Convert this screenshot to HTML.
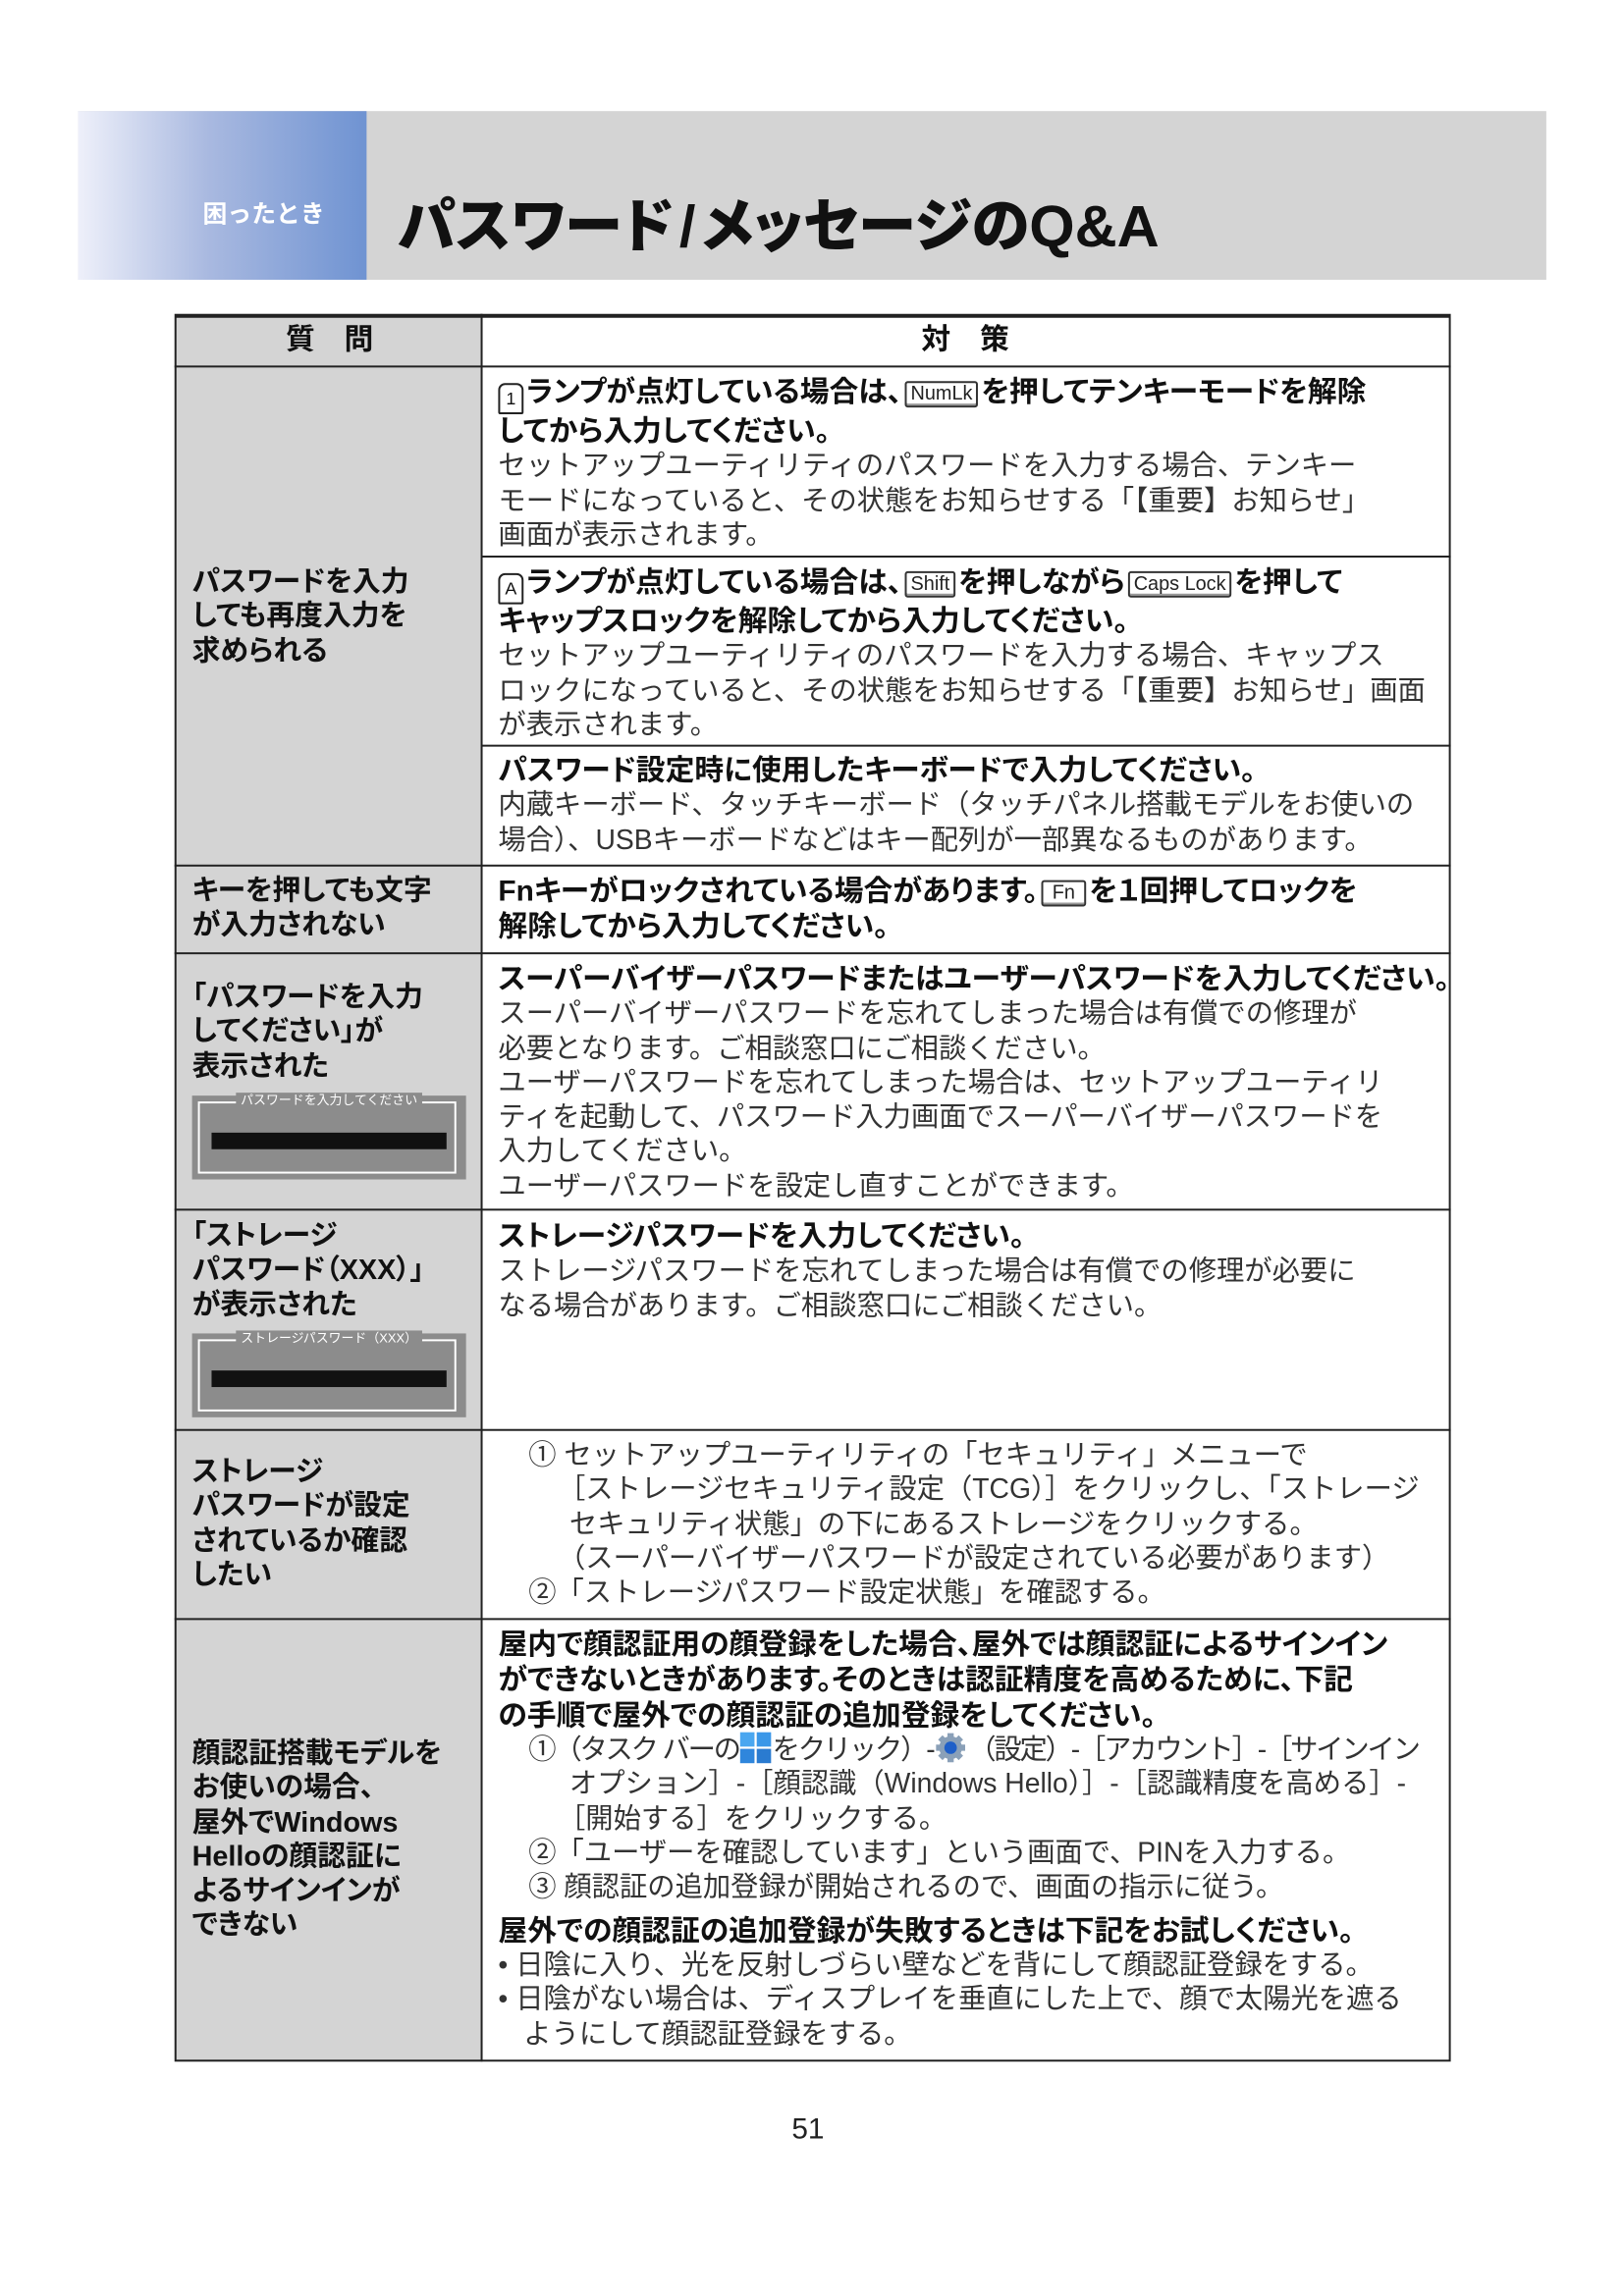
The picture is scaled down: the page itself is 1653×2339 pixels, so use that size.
<!DOCTYPE html>
<html><head><meta charset="utf-8">
<style>
body{margin:0;width:1653px;height:2339px;background:#fff;position:relative;font-family:"Liberation Sans","Noto Sans CJK JP",sans-serif;color:#333;overflow:hidden}
#w{position:absolute;left:0;top:0;width:1653px;height:2339px;transform:scale(0.993);transform-origin:0 0}
.abs{position:absolute}
.hdr{left:80px;top:114px;width:1506px;height:173px;background:#d4d4d4}
.blue{left:80px;top:114px;width:296px;height:173px;background:linear-gradient(90deg,#eef0fa 0%,#a9b9e0 45%,#6f93d2 100%)}
.cat{left:208px;top:200px;color:#fff;font-size:25px;font-weight:700}
.title{left:408px;top:184px;font-size:60px;font-weight:900;color:#111;letter-spacing:0px;font-feature-settings:"palt"}
.cell{position:absolute;box-sizing:border-box}
.l{left:179px;width:315px;background:#d4d4d4}
.r{left:494px;width:994px;background:#fff}
.hline{position:absolute;left:179px;width:1309px;height:2px;background:#222}
.txt{position:absolute;font-size:28.5px;line-height:35.3px;white-space:nowrap}
.lt{left:197px;font-weight:700;color:#111;font-feature-settings:"palt";font-size:29px}
.rt{left:511px}
b{color:#111;font-feature-settings:"palt";font-weight:700;font-size:30px}
.key{display:inline-block;border:2px solid #333;border-radius:3px;font-size:20px;line-height:23px;padding:0 4px;vertical-align:2px;font-weight:400;color:#222;box-shadow:inset 0 -2px 0 #999;margin:0 3px}
.lamp{display:inline-block;width:22px;height:28px;border:2px solid #222;border-radius:7px 7px 2px 2px;font-size:18px;line-height:28px;text-align:center;vertical-align:-3px;font-weight:400;margin-right:3px}
.pw{position:absolute;left:197px;width:281px;height:86px;background:#8c8c8c}
.pw .fr{position:absolute;left:6px;top:6px;right:10px;bottom:6px;border:2px solid #fff}
.pw .lb{position:absolute;left:0;right:0;top:-2px;text-align:center;font-size:13px;color:#fff;line-height:14px}
.pw .lb span{background:#8c8c8c;padding:0 5px}
.pw .bar{position:absolute;left:20px;right:20px;top:38px;height:17px;background:#111}
</style></head><body><div id="w">
<div class="abs hdr"></div><div class="abs blue"></div>
<div class="abs cat">困ったとき</div>
<div class="abs title">パスワード<span style="margin:0 6px">/</span>メッセージのQ&amp;A</div>

<div class="cell l" style="top:322px;height:1793px"></div>
<div class="cell r" style="top:322px;height:1793px"></div>
<div class="abs" style="left:179px;top:322px;width:1309px;height:1793px;border:2px solid #222;border-top-width:4px;box-sizing:border-box"></div>
<div class="abs" style="left:493px;top:322px;width:2px;height:1793px;background:#222"></div>
<div class="hline" style="top:375px"></div>
<div class="hline" style="top:570px;left:494px;width:994px"></div>
<div class="hline" style="top:764px;left:494px;width:994px"></div>
<div class="hline" style="top:887px"></div>
<div class="hline" style="top:977px"></div>
<div class="hline" style="top:1240px"></div>
<div class="hline" style="top:1466px"></div>
<div class="hline" style="top:1660px"></div>

<div class="txt" style="left:293px;top:331px;font-weight:700;color:#111;font-size:30px">質　問</div>
<div class="txt" style="left:945px;top:331px;font-weight:700;color:#111;font-size:30px">対　策</div>

<div class="txt lt" style="top:580px">パスワードを入力<br>しても再度入力を<br>求められる</div>
<div class="txt rt" style="top:385px"><b><span class="lamp">1</span>ランプが点灯している場合は、<span class="key">NumLk</span>を押してテンキーモードを解除<br>してから入力してください。</b><br>セットアップユーティリティのパスワードを入力する場合、テンキー<br>モードになっていると、その状態をお知らせする「【重要】お知らせ」<br>画面が表示されます。</div>
<div class="txt rt" style="top:580px"><b><span class="lamp">A</span>ランプが点灯している場合は、<span class="key">Shift</span>を押しながら<span class="key">Caps Lock</span>を押して<br>キャップスロックを解除してから入力してください。</b><br>セットアップユーティリティのパスワードを入力する場合、キャップス<br>ロックになっていると、その状態をお知らせする「【重要】お知らせ」画面<br>が表示されます。</div>
<div class="txt rt" style="top:773px"><b>パスワード設定時に使用したキーボードで入力してください。</b><br>内蔵キーボード、タッチキーボード（タッチパネル搭載モデルをお使いの<br>場合）、USBキーボードなどはキー配列が一部異なるものがあります。</div>

<div class="txt lt" style="top:897px">キーを押しても文字<br>が入力されない</div>
<div class="txt rt" style="top:897px"><b>Fnキーがロックされている場合があります。<span class="key">&nbsp;Fn&nbsp;</span>を１回押してロックを<br>解除してから入力してください。</b></div>

<div class="txt lt" style="top:1006px">「パスワードを入力<br>してください」が<br>表示された</div>
<div class="pw" style="top:1124px"><div class="fr"></div><div class="lb"><span>パスワードを入力してください</span></div><div class="bar"></div></div>
<div class="txt rt" style="top:987px"><b>スーパーバイザーパスワードまたはユーザーパスワードを入力してください。</b><br>スーパーバイザーパスワードを忘れてしまった場合は有償での修理が<br>必要となります。ご相談窓口にご相談ください。<br>ユーザーパスワードを忘れてしまった場合は、セットアップユーティリ<br>ティを起動して、パスワード入力画面でスーパーバイザーパスワードを<br>入力してください。<br>ユーザーパスワードを設定し直すことができます。</div>

<div class="txt lt" style="top:1251px">「ストレージ<br>パスワード（XXX）」<br>が表示された</div>
<div class="pw" style="top:1368px"><div class="fr"></div><div class="lb"><span>ストレージパスワード（XXX）</span></div><div class="bar"></div></div>
<div class="txt rt" style="top:1251px"><b>ストレージパスワードを入力してください。</b><br>ストレージパスワードを忘れてしまった場合は有償での修理が必要に<br>なる場合があります。ご相談窓口にご相談ください。</div>

<div class="txt lt" style="top:1493px">ストレージ<br>パスワードが設定<br>されているか確認<br>したい</div>
<div class="txt rt" style="top:1476px;left:542px">① セットアップユーティリティの「セキュリティ」メニューで<br><span style="padding-left:30px"></span>［ストレージセキュリティ設定（TCG）］をクリックし、「ストレージ<br><span style="padding-left:42px"></span>セキュリティ状態」の下にあるストレージをクリックする。<br><span style="padding-left:30px"></span>（スーパーバイザーパスワードが設定されている必要があります）<br>②「ストレージパスワード設定状態」を確認する。</div>

<div class="txt lt" style="top:1782px">顔認証搭載モデルを<br>お使いの場合、<br>屋外でWindows<br>Helloの顔認証に<br>よるサインインが<br>できない</div>
<div class="txt rt" style="top:1670px"><b>屋内で顔認証用の顔登録をした場合、屋外では顔認証によるサインイン<br>ができないときがあります。そのときは認証精度を高めるために、下記<br>の手順で屋外での顔認証の追加登録をしてください。</b></div>
<div class="txt rt" style="top:1776px;left:542px"><span style="letter-spacing:-2.2px">①（タスク バーの<svg width="34" height="34" viewBox="0 0 30 30" style="vertical-align:-6px"><rect x="1" y="1" width="13" height="13" fill="#4aa7f0"/><rect x="16" y="1" width="13" height="13" fill="#3a97e8"/><rect x="1" y="16" width="13" height="13" fill="#2f86dc"/><rect x="16" y="16" width="13" height="13" fill="#2a7bd0"/></svg>をクリック）-<svg width="32" height="32" viewBox="0 0 30 30" style="vertical-align:-5px;margin:0 2px"><g fill="#8aa0b8"><circle cx="15" cy="15" r="11"/><rect x="12" y="1" width="6" height="28"/><rect x="1" y="12" width="28" height="6"/><rect x="12" y="1" width="6" height="28" transform="rotate(45 15 15)"/><rect x="12" y="1" width="6" height="28" transform="rotate(-45 15 15)"/></g><circle cx="15" cy="15" r="6" fill="#1f5fc8"/></svg>（設定）-［アカウント］-［サインイン</span><br><span style="padding-left:42px"></span>オプション］-［顔認識（Windows Hello）］-［認識精度を高める］-<br><span style="padding-left:30px"></span>［開始する］をクリックする。<br>②「ユーザーを確認しています」という画面で、PINを入力する。<br>③ 顔認証の追加登録が開始されるので、画面の指示に従う。</div>
<div class="txt rt" style="top:1964px"><b>屋外での顔認証の追加登録が失敗するときは下記をお試しください。</b></div>
<div class="txt rt" style="top:1999px">• 日陰に入り、光を反射しづらい壁などを背にして顔認証登録をする。<br>• 日陰がない場合は、ディスプレイを垂直にした上で、顔で太陽光を遮る<br><span style="padding-left:26px"></span>ようにして顔認証登録をする。</div>

<div class="abs" style="left:812px;top:2168px;font-size:30px;color:#222">51</div>
</div></body></html>
